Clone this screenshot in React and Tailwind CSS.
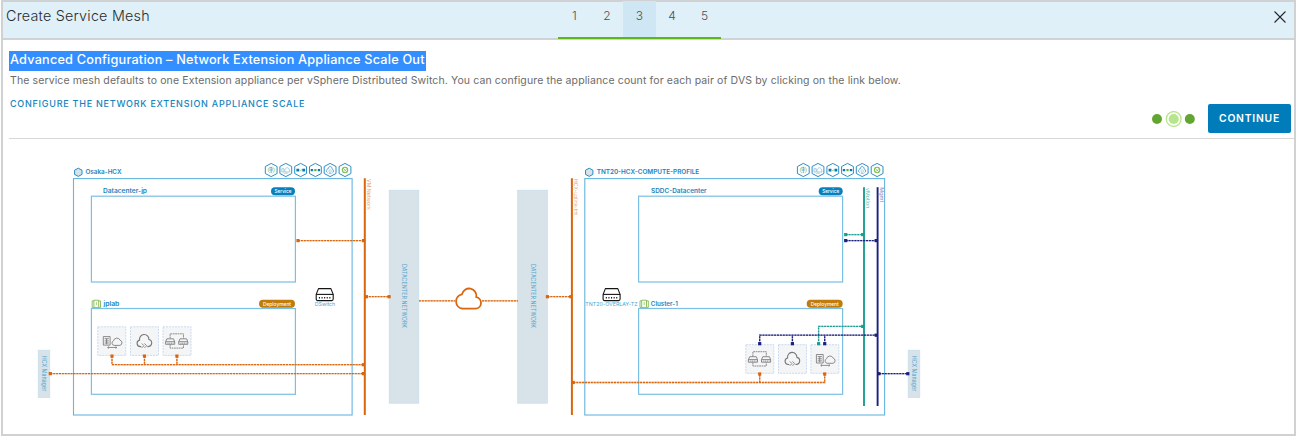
import React from "react";

const ORANGE = "#d9660f";
const NAVY = "#1b2080";
const TEAL = "#1a9e91";

/* Dashed connector with square end markers */
function Link({ points, color, ends = [] }) {
  return (
    <g>
      <polyline points={points} fill="none" stroke={color} strokeOpacity="0.3" strokeWidth="1.4" />
      <polyline points={points} fill="none" stroke={color} strokeWidth="1.3" strokeDasharray="2 0.9" />
      {ends.map(([x, y]) => (
        <rect key={x + "-" + y} x={x - 1.6} y={y - 1.6} width="3.2" height="3.2" fill={color} />
      ))}
    </g>
  );
}

function Label({ x, y, w, size = 5.9, weight = 600, fill = "#1684bd", anchor, children }) {
  return (
    <text x={x} y={y} textLength={w} lengthAdjust="spacingAndGlyphs" fontSize={size} fontWeight={weight} fill={fill} textAnchor={anchor}>
      {children}
    </text>
  );
}

function VerticalLabel({ x, y, w, size = 5.6, fill = "#4fa5cf", children }) {
  return (
    <text transform={`translate(${x} ${y}) rotate(90)`} textLength={w} lengthAdjust="spacingAndGlyphs" fontSize={size} fill={fill}>
      {children}
    </text>
  );
}

function Pill({ right, y, w, tw, fill, children }) {
  return (
    <g>
      <rect x={right - w} y={y} width={w} height="8" rx="4" fill={fill} />
      <Label x={right - w / 2} y={y + 5.8} w={tw} size={5.2} weight={500} fill="#fff" anchor="middle">
        {children}
      </Label>
    </g>
  );
}

function Hexagon({ x, y, children }) {
  return (
    <g transform={`translate(${x} ${y})`}>
      <path d="M0-6.6 5.9-3.5V3.5L0 6.6-5.9 3.5V-3.5Z" fill="#fff" stroke="#2d8fc4" strokeWidth="1" strokeLinejoin="round" />
      {children}
    </g>
  );
}

function ServiceHexagons({ xs }) {
  const y = 170;
  return (
    <g fill="none" strokeWidth="0.8">
      <Hexagon x={xs[0]} y={y}>
        <path d="M-1.2-3A3.3 3.3 0 0 0-1.2 3" stroke="#a6cf83" />
        <path d="M1.3-3A3.3 3.3 0 0 1 1.3 3" stroke="#a6cf83" />
        <path d="M0-3.2V3.2M-1.5-1.4 0-3 1.5-1.4M-2 0H2" stroke="#54a3cf" />
      </Hexagon>
      <Hexagon x={xs[1]} y={y}>
        <path d="M-4 2V-1.3H-1.8V2Z" stroke="#8fbfdd" />
        <path d="M-.8 2C-2-1 1-2.3 1.6-2.3S4.2-1 4 2Z" stroke="#8fbfdd" />
        <path d="M-2 3.2H2" stroke="#a6cf83" />
      </Hexagon>
      <Hexagon x={xs[2]} y={y}>
        <path d="M-4.2-1.3h2.8v2.7h-2.8zM1.7-1.3h2.8v2.7H1.7z" fill="#0079b8" />
        <path d="M-1 .9 1.5-.4" stroke="#8cc765" />
      </Hexagon>
      <Hexagon x={xs[3]} y={y}>
        <path d="M-4.7-1h2.2v2.2h-2.2zM2.5-1h2.2v2.2H2.5z" fill="#0079b8" />
        <path d="M-1.1-1h2.2v2.2h-2.2z" fill="#61b715" />
        <path d="M-2.5.1H-1.1M1.1.1H2.5" stroke="#8fbfdd" />
      </Hexagon>
      <Hexagon x={xs[4]} y={y}>
        <path d="M-2.6 2.6C-5 .8-3-1.1-2-1.1-1.5-4.3 1.7-4.3 2-1.1 4 .3 3.6 2.1 2.4 2.6" stroke="#2d8fc4" />
        <circle r="1.3" cy="1.1" stroke="#a8c9da" />
        <path d="M-1.5 3.3H1.5" stroke="#6daed2" />
      </Hexagon>
      <Hexagon x={xs[5]} y={y}>
        <circle r="2.7" stroke="#7fbe50" strokeWidth="1.1" />
        <path d="m-1.6 0 1.3 1.2L1.8-1.2M-1.7-1.7 1.7 1.7" stroke="#7fbe50" strokeWidth="0.7" />
      </Hexagon>
    </g>
  );
}

function SiteIcon({ x }) {
  return <path transform={`translate(${x} 172.3)`} d="M0-4.1 3.7-2.1V2.1L0 4.1-3.7 2.1V-2.1Z" fill="#d8e3e9" stroke="#268bc0" strokeWidth="1" />;
}

function ClusterIcon({ x }) {
  return (
    <g transform={`translate(${x} 299.4)`} fill="none" stroke="#82b853" strokeWidth="0.9">
      <path d="M2.2.8H7V8H2.2ZM2.2 1.5H.5V8H2.2M7 1.5H8.8V8H7" />
      <path d="M4.7 2.5V5.8" strokeWidth="0.7" />
    </g>
  );
}

function SwitchIcon({ x }) {
  return (
    <g transform={`translate(${x} 288)`} fill="none" stroke="#151515" strokeWidth="1.1" strokeLinejoin="round">
      <path d="M2.9.6H15.3L17.6 6.4V11.1Q17.6 12.6 16.1 12.6H2.1Q.6 12.6.6 11.1V6.4Z" />
      <path d="M.6 6.4H17.6" />
      <path d="M3.3 9.7H15.5" strokeWidth="1.5" strokeDasharray="1.1 1.5" />
    </g>
  );
}

function Tile({ x, y, children }) {
  return (
    <g transform={`translate(${x} ${y})`}>
      <rect x="0.5" y="0.5" width="28" height="28.6" fill="#f4f5f6" stroke="#c6d6ee" strokeWidth="0.9" strokeDasharray="2 1" />
      <g fill="none" stroke="#777" strokeWidth="0.85" strokeLinejoin="round">{children}</g>
    </g>
  );
}

function MigrationGlyph() {
  return (
    <>
      <path d="M6 10.3H12.8V18.8H6ZM7.3 12.4H11.5M7.3 14.6H11.5M7.3 16.7H11.5M9.3 12.4V18" />
      <path d="M16.8 19.1A2.4 2.4 0 0 1 16.2 14.5 3.5 3.5 0 0 1 22.8 13.9 2.7 2.7 0 0 1 22.6 19.1Z" />
      <path d="M10.4 21.2H19.5M11.6 20.2 10.4 21.2 11.6 22.2M18.3 20.2 19.5 21.2 18.3 22.2" strokeWidth="0.8" />
    </>
  );
}

function CloudGlyph() {
  return (
    <>
      <path d="M11.3 20.3H10.2A3.3 3.3 0 0 1 9.6 13.8 4.7 4.7 0 1 1 18.9 13.2 3.6 3.6 0 0 1 18.3 20.3H17.4" strokeWidth="1.1" />
      <path d="m11.8 17.2 2.2 2.2-2.2 2.2m2.7-4.4 2.2 2.2-2.2 2.2" />
    </>
  );
}

function ExtensionGlyph() {
  return (
    <>
      <path d="M4.4 12.5H11L12.2 15.5V18H3.1V15.5ZM17.5 12.5H24.1L25.3 15.5V18H16.2V15.5ZM3.1 15.4H12.2M16.2 15.4H25.3" />
      <path d="M5 16.9H11M18 16.9H24" strokeDasharray="1 .8" />
      <path d="M7.6 12V7.5H21V12M7.6 18.5V21.8H21V18.5" strokeDasharray="1.8 .6" />
    </>
  );
}

function SiteFrame({ x, w, inner }) {
  return (
    <g fill="none">
      <rect x={x} y="178.6" width={w} height="236.4" stroke="#66b4df" strokeWidth="1.1" />
      <rect x={inner} y="196.2" width="204" height="85.8" stroke="#7bbfe4" strokeWidth="1.2" />
      <rect x={inner} y="308.5" width="204" height="85.8" stroke="#7bbfe4" strokeWidth="1.2" />
    </g>
  );
}

function Slab({ x, y, w, h }) {
  return <rect x={x} y={y} width={w} height={h} fill="#d8e3e9" stroke="#c3dcea" strokeWidth="0.7" />;
}

function Topology() {
  return (
    <svg className="block h-[294px] w-[1291px]" viewBox="3 139 1291 294" fontFamily="Inter, 'Liberation Sans', sans-serif">
      <SiteFrame x={73.5} w={278.6} inner={91.4} />
      <SiteFrame x={584.8} w={299.8} inner={638.6} />

      <SiteIcon x={78.3} />
      <Label x={85.5} y={174.4} w={36}>Osaka-HCX</Label>
      <Label x={103} y={193.2} w={44}>Datacenter-jp</Label>
      <ClusterIcon x={91.7} />
      <Label x={103.4} y={305.5} w={16}>jplab</Label>
      <Pill right={295} y={187.3} w={24} tw={17} fill="#0b7fbb">Service</Pill>
      <Pill right={295} y={299.8} w={36} tw={28} fill="#c17c0b">Deployment</Pill>
      <ServiceHexagons xs={[271.2, 285.8, 300.6, 315.4, 330.1, 345]} />

      <SiteIcon x={589.2} />
      <Label x={596.7} y={174.4} w={102.5}>TNT20-HCX-COMPUTE-PROFILE</Label>
      <Label x={651} y={193.2} w={55.5}>SDDC-Datacenter</Label>
      <ClusterIcon x={639.5} />
      <Label x={650.8} y={305.5} w={27}>Cluster-1</Label>
      <Pill right={842.7} y={187.3} w={24} tw={17} fill="#0b7fbb">Service</Pill>
      <Pill right={842.7} y={299.8} w={36} tw={28} fill="#c17c0b">Deployment</Pill>
      <ServiceHexagons xs={[803.3, 818, 832.8, 847.5, 862.2, 877.1]} />

      <SwitchIcon x={315.6} />
      <Label x={314.8} y={306.1} w={20.3} size={5} weight={400} fill="#4aa5d1">DSwitch</Label>
      <SwitchIcon x={602.5} />
      <Label x={585.3} y={306.1} w={52.3} size={5} weight={400} fill="#4aa5d1">TNT20-OVERLAY-TZ</Label>

      <Slab x={389.2} y={190.2} w={29.6} h={213} />
      <Slab x={517.7} y={190.2} w={29.6} h={213} />
      <VerticalLabel x={402} y={264} w={64}>DATACENTER NETWORK</VerticalLabel>
      <VerticalLabel x={530.7} y={264} w={64}>DATACENTER NETWORK</VerticalLabel>
      <Slab x={38.2} y={350.2} w={11.6} h={47.2} />
      <Slab x={908.2} y={350.2} w={11.6} h={47.2} />
      <VerticalLabel x={42} y={355.7} w={35.5}>HCX Manager</VerticalLabel>
      <VerticalLabel x={912} y={355.7} w={35.5}>HCX Manager</VerticalLabel>

      <path d="M364.8 178.3V415M571.9 178.3V415" stroke={ORANGE} strokeWidth="2" />
      <path d="M864 187.2V406" stroke={TEAL} strokeWidth="1.9" />
      <path d="M877.6 187.2V406" stroke={NAVY} strokeWidth="1.9" />
      <VerticalLabel x={367} y={179} w={31} size={5} fill="#e39a65">VM Network</VerticalLabel>
      <VerticalLabel x={574} y={179} w={36} size={5} fill="#e39a65">HCX-uplink-tnt</VerticalLabel>
      <VerticalLabel x={866} y={188} w={20.5} size={5} fill="#55b9af">vMotion</VerticalLabel>
      <VerticalLabel x={879.5} y={187.2} w={15} size={5} fill="#8386bc">Mgmt</VerticalLabel>

      <Tile x={97.3} y={326.3}><MigrationGlyph /></Tile>
      <Tile x={130} y={326.3}><CloudGlyph /></Tile>
      <Tile x={162.5} y={326.3}><ExtensionGlyph /></Tile>
      <Tile x={745.3} y={344.2}><ExtensionGlyph /></Tile>
      <Tile x={778} y={344.2}><CloudGlyph /></Tile>
      <Tile x={810.4} y={344.2}><MigrationGlyph /></Tile>

      <Link points="298,240.6 364,240.6" color={ORANGE} ends={[[298, 240.6], [363.6, 240.6]]} />
      <Link points="366,296.7 389,296.7" color={ORANGE} ends={[[366.4, 296.7], [389.1, 296.7]]} />
      <Link points="419,300.8 455,300.8" color={ORANGE} />
      <Link points="482,300.8 518,300.8" color={ORANGE} />
      <Link points="547.5,296.7 571,296.7" color={ORANGE} ends={[[547.4, 296.7], [570.8, 296.7]]} />
      <path d="M462.5 308.7A7.3 7.3 0 0 1 462 294.3 7.2 7.2 0 1 1 476.2 297.2 5.8 5.8 0 0 1 475.6 308.7Z" fill="none" stroke={ORANGE} strokeWidth="1.8" strokeLinejoin="round" />

      <Link points="112,356 112,364.7 364,364.7" color={ORANGE} ends={[[112, 356.1], [363.4, 364.7]]} />
      <Link points="144.5,356 144.5,364.7" color={ORANGE} ends={[[144.5, 356.1]]} />
      <Link points="176.9,356 176.9,364.7" color={ORANGE} ends={[[176.9, 356.1]]} />
      <Link points="50.3,373.6 364,373.6" color={ORANGE} ends={[[50.3, 373.6], [363.4, 373.6]]} />

      <Link points="573.4,382.5 824.7,382.5 824.7,374" color={ORANGE} ends={[[573.2, 382.5], [824.7, 374]]} />
      <Link points="759.7,382.5 759.7,374" color={ORANGE} ends={[[759.7, 374]]} />
      <Link points="818.6,344 818.6,326.4 863,326.4" color={TEAL} ends={[[818.6, 343.7], [862.7, 326.4]]} />
      <Link points="759.7,344 759.7,335.2 876.6,335.2" color={NAVY} ends={[[759.7, 343.7], [876.2, 335.2]]} />
      <Link points="792.4,344 792.4,335.2" color={NAVY} ends={[[792.4, 343.7]]} />
      <Link points="824.7,344 824.7,335.2" color={NAVY} ends={[[824.7, 343.7]]} />
      <Link points="845.7,234.6 863,234.6" color={TEAL} ends={[[845.7, 234.6], [862.7, 234.6]]} />
      <Link points="845.7,240.6 876,240.6" color={NAVY} ends={[[845.7, 240.6], [876.2, 240.6]]} />
      <Link points="879,373.7 908,373.7" color={NAVY} ends={[[878.9, 373.7], [907.8, 373.7]]} />
    </svg>
  );
}

function Header() {
  return (
    <header className="flex h-[38px] w-full items-start justify-between border-b-2 border-[#cfd3d5] bg-[#dff0f8]">
      <h1 className="w-[555px] pt-[3px] pl-[3px] text-[14.3px] leading-[22px] font-light tracking-[0.24px] text-[#272b2e]">Create Service Mesh</h1>
      <nav className="-mt-0.5 flex h-[39px] w-[163px] border-b-2 border-[#5eb715] pt-px">
        {[1, 2, 3, 4, 5].map((n) => (
          <span key={n} className={"flex-1 pt-[5px] text-center text-[12px] leading-5 font-light text-[#4b5055] " + (n === 3 ? "bg-[#cfe7f4]" : "")}>
            {n}
          </span>
        ))}
      </nav>
      <div className="flex w-[573px] justify-end pt-[9px] pr-2">
        <svg className="size-3" viewBox="0 0 12 12" stroke="#1a1f22" strokeWidth="1.3" strokeLinecap="round">
          <path d="m.9.9 10.2 10.2m0-10.2L.9 11.1" />
        </svg>
      </div>
    </header>
  );
}

export default function App() {
  return (
    <div className="h-[438px] w-[1296px] overflow-hidden bg-white pl-px font-['Inter','Liberation_Sans',sans-serif]">
      <div className="h-[436px] w-[1295px] border-2 border-[#cfd1d3]">
        <Header />
        <section className="h-[99px] pl-1.5">
          <div className="flex h-[99px] justify-between border-b border-[#d7d7d7]">
            <div className="flex flex-col items-start pt-[11px]">
              <h2 className="h-5 w-[417px] bg-[#338fff] pl-px text-[12.7px] leading-[18px] font-medium whitespace-nowrap text-white">
                <span className="tracking-[0.21px]">Advanced Configuration – Network Extension Appliance Scale Out</span>
              </h2>
              <p className="pt-px pl-px text-[10.5px] leading-[18px] tracking-[0.115px] whitespace-nowrap text-[#6b6b6b]">
                The service mesh defaults to one Extension appliance per vSphere Distributed Switch. You can configure the appliance count for each pair of DVS by clicking on the link below.
              </p>
              <a className="pt-[6px] pl-px text-[9px] leading-4 font-medium tracking-[0.75px] whitespace-nowrap text-[#1484be]">CONFIGURE THE NETWORK EXTENSION APPLIANCE SCALE</a>
            </div>
            <div className="flex items-end gap-[13px] pr-[3px] pb-[5px]">
              <svg className="mb-1.5 h-4 w-[43px]" viewBox="0 0 43 16">
                <circle cx="5" cy="8" r="5" fill="#62a530" />
                <circle cx="21.7" cy="8" r="7.4" fill="#fff" stroke="#b7e58c" strokeWidth="1.3" />
                <circle cx="21.7" cy="8" r="5.1" fill="#b7e58c" />
                <circle cx="37.8" cy="8" r="5" fill="#62a530" />
              </svg>
              <button className="flex h-[29px] w-[83px] items-center justify-center rounded-[2px] bg-[#007cba] text-[10.3px] font-semibold tracking-[0.8px] text-white">CONTINUE</button>
            </div>
          </div>
        </section>
        <Topology />
      </div>
    </div>
  );
}
